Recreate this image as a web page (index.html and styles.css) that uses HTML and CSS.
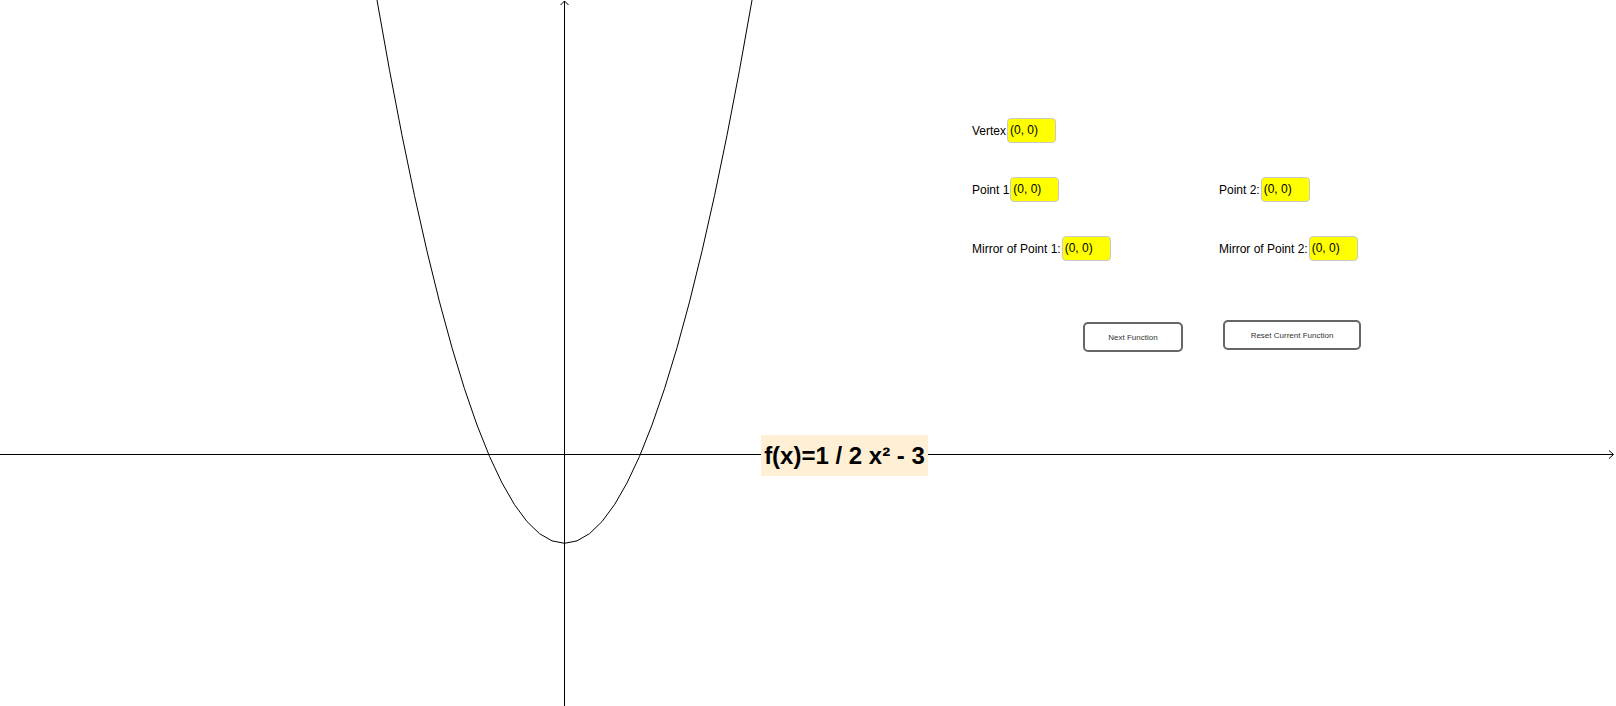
FILE: index.html
```html
<!DOCTYPE html>
<html>
<head>
  <meta charset="UTF-8">
  <title>Parabola Points</title>
  <meta name="viewport" content="width=device-width, initial-scale=1">
  <link rel="stylesheet" href="styles.css">
</head>
<body>

  <div class="applet">

    <!-- graphics view: axes and the current function -->
    <svg class="graph" width="1616" height="706" viewBox="0 0 1616 706">
      <!-- x axis -->
      <line x1="0" y1="454.5" x2="1613" y2="454.5" class="axis"/>
      <polyline points="1609,450.5 1613.5,454.5 1609,458.5" class="axis-arrow"/>
      <!-- y axis -->
      <line x1="564.5" y1="1" x2="564.5" y2="706" class="axis"/>
      <polyline points="560.5,5 564.5,1 568.5,5" class="axis-arrow"/>
      <!-- f(x) = 1/2 x^2 - 3 -->
      <path d="M364.5,-74.7 Q564.5,1161.3 764.5,-74.7" class="curve"/>
    </svg>

    <div class="func-label">f(x)=1 / 2 x² - 3</div>

    <!-- input boxes and buttons -->
    <div class="panel">
      <div class="fields">
        <div class="field">Vertex<span class="value">(0, 0)</span></div>
        <div></div>
        <div class="field">Point 1<span class="value">(0, 0)</span></div>
        <div class="field">Point 2:<span class="value">(0, 0)</span></div>
        <div class="field">Mirror of Point 1:<span class="value">(0, 0)</span></div>
        <div class="field">Mirror of Point 2:<span class="value">(0, 0)</span></div>
      </div>
      <div class="actions">
        <button class="btn btn-next">Next Function</button>
        <button class="btn btn-reset">Reset Current Function</button>
      </div>
    </div>

  </div>

</body>
</html>
```

FILE: styles.css
```css
body{
  margin: 0;
  font-family: "Liberation Sans", Arial, sans-serif;
  background-color: #fff;
}

.applet{
  position: relative;
  width: 1616px;
  height: 706px;
  overflow: hidden;
}

.graph{
  display: block;
}

.axis{
  stroke: #000;
  stroke-width: 1;
}

.axis-arrow{
  fill: none;
  stroke: #000;
  stroke-width: 1;
}

.curve{
  fill: none;
  stroke: #000;
  stroke-width: 1;
}

/* function caption sitting on the x axis */
.func-label{
  position: absolute;
  left: 761px;
  top: 435px;
  width: 167px;
  height: 41px;
  line-height: 41px;
  text-align: center;
  background-color: #ffefd5;
  font-size: 24px;
  font-weight: bold;
  color: #000;
}

.panel{
  position: absolute;
  left: 972px;
  top: 118px;
}

.fields{
  display: grid;
  grid-template-columns: 247px auto;
  grid-auto-rows: 25px;
  row-gap: 34px;
}

.field{
  display: flex;
  align-items: center;
  gap: 1px;
  font-size: 12px;
  color: #000;
  white-space: nowrap;
}

.value{
  box-sizing: border-box;
  width: 49px;
  height: 25px;
  line-height: 23px;
  padding-left: 2px;
  border: 1px solid #c8c8c8;
  border-radius: 4px;
  background-color: #ffff00;
}

.actions{
  display: flex;
  align-items: flex-start;
  gap: 40px;
  margin-top: 59px;
  padding-left: 111px;
}

.btn{
  box-sizing: border-box;
  height: 30px;
  border: 2px solid #666;
  border-radius: 5px;
  background-color: #fff;
  color: #333;
  font-family: "Liberation Sans", Arial, sans-serif;
  font-size: 8px;
  padding: 0;
}

.btn-next{
  width: 100px;
  margin-top: 2px;
}

.btn-reset{
  width: 138px;
}
```
